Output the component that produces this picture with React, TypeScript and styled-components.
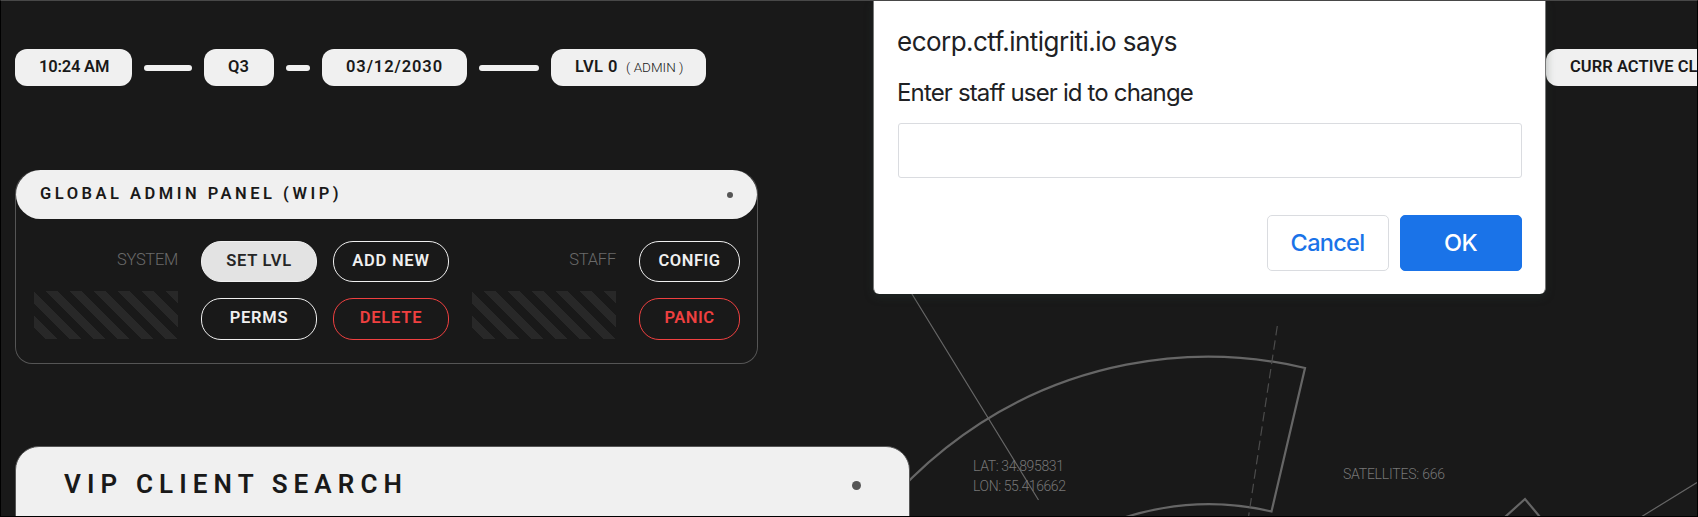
import React from "react";
import styled, { createGlobalStyle, css } from "styled-components";

const ink = "#191919";
const paper = "#f0f0f0";
const line = "#555";
const techFont = css`
  font-family: Roboto, "Liberation Sans", sans-serif;
`;

const GlobalStyle = createGlobalStyle`
  * { box-sizing: border-box; }
  body { margin: 0; background: ${ink}; overflow: hidden; }
`;

const Page = styled.div`
  ${techFont}
  position: relative;
  width: 1698px;
  height: 517px;
  overflow: hidden;
  background: ${ink};
  border: 1px solid #000;
  border-top-color: #484848;
  padding: 48px 0 0 14px;
  display: flex;
  flex-direction: column;
  align-items: flex-start;
`;

const StatusBar = styled.header`
  display: flex;
  align-items: center;
  gap: 12px;
  height: 37px;
`;

const Chip = styled.div<{ $w: number; $tracking?: number }>`
  flex: none;
  width: ${(p) => p.$w}px;
  height: 37px;
  border-radius: 12px;
  background: ${paper};
  color: ${ink};
  padding: 0 0 2px 24px;
  display: flex;
  align-items: center;
  font-size: 16.5px;
  font-weight: 600;
  letter-spacing: ${(p) => p.$tracking ?? 0}px;
  white-space: nowrap;
`;

const EdgeChip = styled(Chip)`
  margin-left: 828px;
  border-radius: 12px 0 0 12px;
`;

const Role = styled.small`
  font-size: 13.5px;
  font-weight: 300;
  letter-spacing: 0;
  margin: 0 0 0 8px;
`;

const Connector = styled.i<{ $w: number }>`
  flex: none;
  width: ${(p) => p.$w}px;
  height: 6px;
  margin-top: 1px;
  border-radius: 3px;
  background: ${paper};
`;

const AdminPanel = styled.section`
  margin-top: 84px;
  width: 743px;
  height: 194px;
  flex: none;
  border: 1px solid ${line};
  border-top: 0;
  border-radius: 24px 24px 17px 17px;
`;

const PanelHeader = styled.div`
  height: 49px;
  border-radius: 24.5px;
  background: ${paper};
  color: ${ink};
  padding: 0 24px;
  display: flex;
  align-items: center;
  justify-content: space-between;
`;

const PanelTitle = styled.h2`
  margin: 0;
  padding-bottom: 2px;
  font-size: 16.5px;
  font-weight: 600;
  letter-spacing: 3.5px;
  white-space: nowrap;
`;

const Dot = styled.span<{ $size: number }>`
  width: ${(p) => p.$size}px;
  height: ${(p) => p.$size}px;
  border-radius: 50%;
  background: ${line};
`;

const Controls = styled.div`
  display: flex;
  gap: 23px;
  padding: 22px 17px 0 18px;
`;

const LabelColumn = styled.div`
  width: 144px;
  flex: none;
  text-align: right;
`;

const GroupLabel = styled.div<{ $tracking: number }>`
  height: 50px;
  padding-top: 9px;
  line-height: 20px;
  font-size: 16.5px;
  font-weight: 300;
  color: #6a6a6a;
  letter-spacing: ${(p) => p.$tracking}px;
`;

const Hatching = styled.div`
  height: 48px;
  background: repeating-linear-gradient(45deg, transparent 0 8.485px, #282828 8.485px 16.97px);
`;

const ButtonGrid = styled.div<{ $cols: number; $w: number }>`
  display: grid;
  flex: none;
  grid-template-columns: repeat(${(p) => p.$cols}, ${(p) => p.$w}px);
  grid-template-rows: 41px 42px;
  gap: 16px;
`;

const PillButton = styled.button<{ $variant?: "filled" | "danger"; $tracking?: number }>`
  ${techFont}
  border: 1px solid ${(p) => (p.$variant === "danger" ? "#ef4040" : paper)};
  border-radius: 20px;
  background: ${(p) => (p.$variant === "filled" ? "#e3e3e3" : "transparent")};
  color: ${(p) => (p.$variant === "danger" ? "#ef4040" : p.$variant === "filled" ? "#262626" : paper)};
  padding: 0 0 3px;
  font-size: 16.5px;
  font-weight: 600;
  letter-spacing: ${(p) => p.$tracking ?? 0.75}px;
  white-space: nowrap;
`;

const SearchPanel = styled.section`
  position: relative;
  margin-top: 82px;
  width: 895px;
  height: 71px;
  flex: none;
  border: 1px solid ${line};
  border-radius: 24px 24px 0 0;
  background: ${paper};
  color: ${ink};
  padding: 19px 48px 0 48px;
  display: flex;
  align-items: flex-start;
  justify-content: space-between;
`;

const SearchTitle = styled.h1`
  margin: 0;
  font-size: 26px;
  line-height: 36px;
  font-weight: 600;
  letter-spacing: 6.1px;
  white-space: nowrap;
`;

const SearchDot = styled(Dot)`
  margin-top: 15px;
`;

const Radar = styled.svg`
  position: absolute;
  inset: -1px auto auto -1px;
  pointer-events: none;
`;

const Annotation = styled.text`
  ${techFont}
  font-size: 14px;
  font-weight: 300;
  fill: #777;
`;

const Dialog = styled.div`
  position: absolute;
  left: 872px;
  top: 0;
  width: 673px;
  height: 293px;
  border: 1px solid #777;
  border-width: 0 1px;
  border-radius: 0 0 6px 6px;
  background: #fff;
  color: #202124;
  padding: 24px 23px 0 23px;
  font-family: Inter, "Liberation Sans", sans-serif;
  box-shadow: 0 3px 8px rgba(40, 60, 55, 0.35);
`;

const DialogTitle = styled.div`
  font-size: 26px;
  line-height: 34px;
  letter-spacing: -0.53px;
`;

const DialogText = styled.div`
  margin-top: 18px;
  font-size: 24px;
  line-height: 32px;
  letter-spacing: -0.85px;
`;

const PromptInput = styled.input`
  display: block;
  width: 624px;
  height: 55px;
  margin: 14px 0 0 1px;
  border: 1px solid #dadce0;
  border-radius: 3px;
  background: #fff;
`;

const DialogActions = styled.div`
  display: flex;
  justify-content: flex-end;
  gap: 11px;
  margin-top: 37px;
`;

const DialogButton = styled.button<{ $primary?: boolean }>`
  width: 122px;
  height: 56px;
  border: 1px solid ${(p) => (p.$primary ? "#1a73e8" : "#dadce0")};
  border-radius: 5px;
  background: ${(p) => (p.$primary ? "#1a73e8" : "#fff")};
  color: ${(p) => (p.$primary ? "#fff" : "#1a73e8")};
  font-family: Inter, "Liberation Sans", sans-serif;
  font-size: 23.5px;
  font-weight: 450;
  letter-spacing: -0.7px;
  padding: 0 1px 2px 0;
`;

export default function App() {
  return (
    <>
      <GlobalStyle />
      <Page>
        <Radar width="1698" height="517" viewBox="0 0 1698 517" fill="none">
          <g stroke="#666">
            <path d="M900 274.5L1038.5 500M1641 517L1697 482.5" strokeWidth="1.2" />
            <path d="M786 779A422 422 0 0 1 1305 368L1271.5 511.5A275 275 0 0 0 936 745" strokeWidth="2.2" />
            <path d="M1505 517L1525 499L1540 517" strokeWidth="2.2" />
          </g>
          <path d="M1277.3 326L1248.5 517" stroke="#4c4c4c" strokeWidth="1.2" strokeDasharray="9.5 5" />
          <Annotation x="973" y="471" textLength="91">LAT: 34.895831</Annotation>
          <Annotation x="973" y="491" textLength="93">LON: 55.416662</Annotation>
          <Annotation x="1343" y="479" textLength="102">SATELLITES: 666</Annotation>
        </Radar>

        <StatusBar>
          <Chip $w={117} $tracking={-0.2}>10:24 AM</Chip>
          <Connector $w={48} />
          <Chip $w={70} $tracking={0.2}>Q3</Chip>
          <Connector $w={24} />
          <Chip $w={145} $tracking={0.9}>03/12/2030</Chip>
          <Connector $w={60} />
          <Chip $w={155} $tracking={0.5}>
            LVL 0<Role>( ADMIN )</Role>
          </Chip>
          <EdgeChip $w={151} $tracking={0.05}>CURR ACTIVE CL</EdgeChip>
        </StatusBar>

        <AdminPanel>
          <PanelHeader>
            <PanelTitle>GLOBAL ADMIN PANEL (WIP)</PanelTitle>
            <Dot $size={6} />
          </PanelHeader>
          <Controls>
            <LabelColumn>
              <GroupLabel $tracking={-0.3}>SYSTEM</GroupLabel>
              <Hatching />
            </LabelColumn>
            <ButtonGrid $cols={2} $w={116}>
              <PillButton $variant="filled">SET LVL</PillButton>
              <PillButton>ADD NEW</PillButton>
              <PillButton>PERMS</PillButton>
              <PillButton $variant="danger">DELETE</PillButton>
            </ButtonGrid>
            <LabelColumn>
              <GroupLabel $tracking={-0.2}>STAFF</GroupLabel>
              <Hatching />
            </LabelColumn>
            <ButtonGrid $cols={1} $w={101}>
              <PillButton $tracking={0.5}>CONFIG</PillButton>
              <PillButton $variant="danger" $tracking={0.5}>PANIC</PillButton>
            </ButtonGrid>
          </Controls>
        </AdminPanel>

        <SearchPanel>
          <SearchTitle>VIP CLIENT SEARCH</SearchTitle>
          <SearchDot $size={9} />
        </SearchPanel>

        <Dialog role="dialog">
          <DialogTitle>ecorp.ctf.intigriti.io says</DialogTitle>
          <DialogText>Enter staff user id to change</DialogText>
          <PromptInput />
          <DialogActions>
            <DialogButton>Cancel</DialogButton>
            <DialogButton $primary>OK</DialogButton>
          </DialogActions>
        </Dialog>
      </Page>
    </>
  );
}
